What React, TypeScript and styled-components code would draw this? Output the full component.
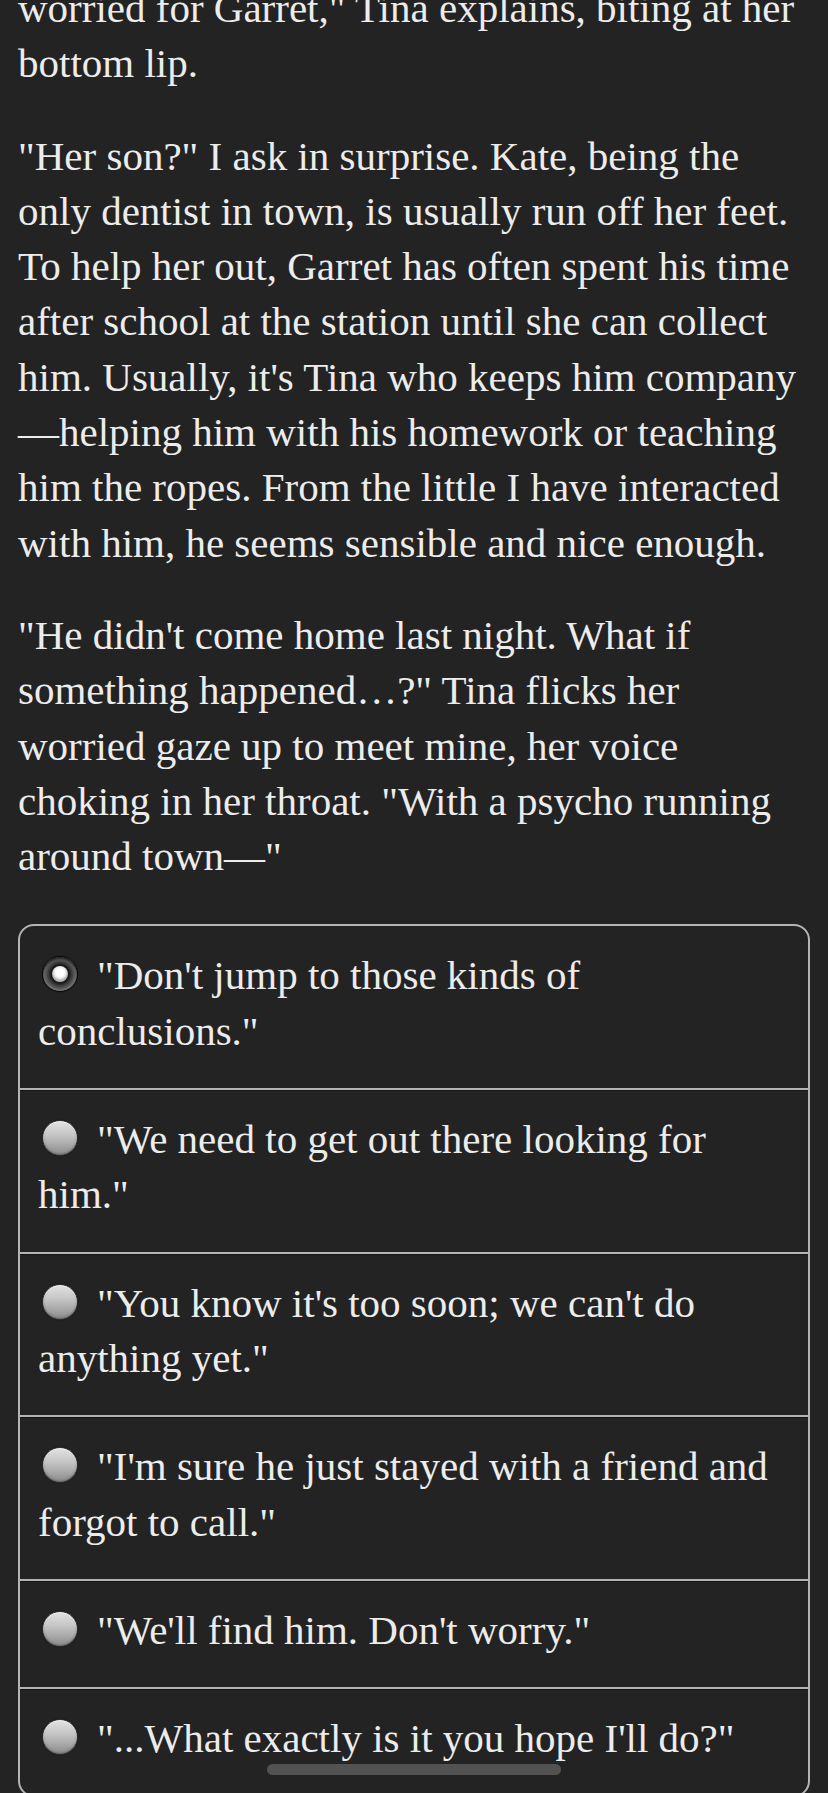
import React, { useState } from 'react';
import styled, { createGlobalStyle } from 'styled-components';

const GlobalStyle = createGlobalStyle`
  html, body {
    margin: 0;
    padding: 0;
    background: #232323;
  }
  body {
    font-family: "Liberation Serif", "Times New Roman", serif;
    color: #ececec;
    -webkit-font-smoothing: antialiased;
  }
`;

const Page = styled.main`
  position: relative;
  height: 1793px;
  padding: 0 18px;
  box-sizing: border-box;
  overflow: hidden;
`;

const Paragraph = styled.p<{ $first?: boolean }>`
  margin: ${p => (p.$first ? '-19px' : '37px')} 0 0;
  font-size: 41px;
  line-height: 55.3px;
  white-space: pre-line;
`;

const Choices = styled.div`
  margin-top: 40px;
  border: 2px solid #b4b4b4;
  border-radius: 16px;
  overflow: hidden;
`;

const Choice = styled.label`
  display: block;
  padding: 22px 18px 29px;
  font-size: 41px;
  line-height: 55.3px;
  white-space: pre-line;
  cursor: pointer;

  & + & {
    border-top: 2px solid #b4b4b4;
    box-shadow: inset 0 1px 0 #151515;
  }
`;

const Radio = styled.span<{ $checked: boolean }>`
  position: relative;
  display: inline-block;
  width: 36px;
  height: 36px;
  margin: 0 19px 0 4px;
  vertical-align: -3px;
  border-radius: 50%;
  box-sizing: border-box;
  border: 1px solid ${p => (p.$checked ? '#080808' : '#2e2e2e')};
  background: ${p =>
    p.$checked
      ? 'radial-gradient(circle at 50% 50%, #181818 0 9px, #333 11px, #555 14px, #7a7a7a 17px)'
      : 'linear-gradient(180deg, #e2e2e2 0%, #c6c6c6 40%, #a4a4a4 75%, #8a8a8a 100%)'};
  box-shadow: ${p =>
    p.$checked
      ? 'inset 0 2px 2px rgba(0,0,0,0.7), 0 0 1px rgba(0,0,0,0.9)'
      : 'inset 0 1px 1px rgba(255,255,255,0.7), inset 0 -1px 2px rgba(60,60,60,0.5), 0 0 1px rgba(0,0,0,0.9)'};

  &::after {
    content: '';
    display: ${p => (p.$checked ? 'block' : 'none')};
    position: absolute;
    left: 50%;
    top: 50%;
    width: 16px;
    height: 16px;
    transform: translate(-50%, -50%);
    border-radius: 50%;
    background: radial-gradient(circle at 50% 40%, #ffffff 0 4px, #e6e6e6 6px, #b4b4b4 8px);
  }
`;

const HomeIndicator = styled.div`
  position: absolute;
  left: 50%;
  bottom: 18px;
  width: 294px;
  height: 11px;
  transform: translateX(-50%);
  border-radius: 6px;
  background: rgba(88, 88, 88, 0.9);
`;

const paragraphs = [
  'worried for Garret," Tina explains, biting at her\nbottom lip.',
  '"Her son?" I ask in surprise. Kate, being the\nonly dentist in town, is usually run off her feet.\nTo help her out, Garret has often spent his time\nafter school at the station until she can collect\nhim. Usually, it\'s Tina who keeps him company\n\u2014helping him with his homework or teaching\nhim the ropes. From the little I have interacted\nwith him, he seems sensible and nice enough.',
  '"He didn\'t come home last night. What if\nsomething happened\u2026?" Tina flicks her\nworried gaze up to meet mine, her voice\nchoking in her throat. "With a psycho running\naround town\u2014"',
];

const options = [
  '"Don\'t jump to those kinds of\nconclusions."',
  '"We need to get out there looking for\nhim."',
  '"You know it\'s too soon; we can\'t do\nanything yet."',
  '"I\'m sure he just stayed with a friend and\nforgot to call."',
  '"We\'ll find him. Don\'t worry."',
  '"...What exactly is it you hope I\'ll do?"',
];

function App() {
  const [selected, setSelected] = useState(0);

  return (
    <>
      <GlobalStyle />
      <Page>
        {paragraphs.map((text, i) => (
          <Paragraph key={i} $first={i === 0}>{text}</Paragraph>
        ))}

        <Choices role="radiogroup">
          {options.map((text, i) => (
            <Choice key={i} onClick={() => setSelected(i)}>
              <Radio $checked={selected === i} role="radio" aria-checked={selected === i} />
              {text}
            </Choice>
          ))}
        </Choices>

        <HomeIndicator />
      </Page>
    </>
  );
}

export default App;
